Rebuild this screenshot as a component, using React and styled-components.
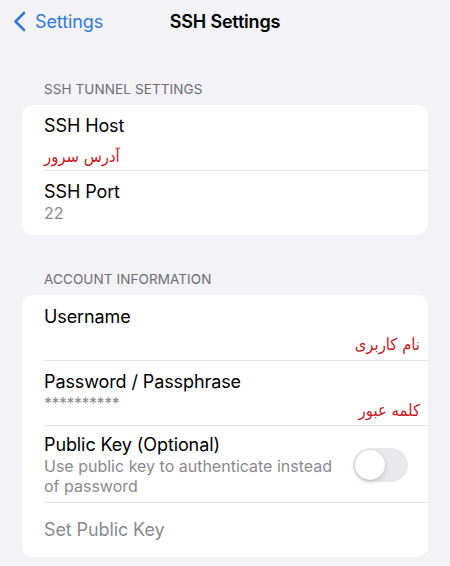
import React, { useState } from 'react';
import styled, { createGlobalStyle } from 'styled-components';

const GlobalStyle = createGlobalStyle`
  body {
    margin: 0;
    background: #f2f2f7;
    font-family: Inter, "Liberation Sans", sans-serif;
    -webkit-font-smoothing: antialiased;
  }
`;

const Page = styled.div`
  width: 450px;
  min-height: 566px;
  background: #f2f2f7;
  overflow: hidden;
`;

const NavBar = styled.header`
  height: 42px;
  display: grid;
  grid-template-columns: 1fr auto 1fr;
  align-items: center;
`;

const BackLink = styled.a`
  display: flex;
  align-items: center;
  gap: 9px;
  padding-left: 13px;
  color: #2f7bd6;
  font-size: 18px;
  letter-spacing: -0.1px;
  text-decoration: none;
  cursor: pointer;
`;

const Title = styled.h1`
  margin: 0;
  font-size: 18px;
  font-weight: 600;
  color: #000;
  letter-spacing: -0.2px;
`;

const SectionHeader = styled.div`
  padding: 0 44px;
  margin-top: ${(p) => p.$top}px;
  height: 17px;
  line-height: 17px;
  font-size: 13.5px;
  color: #6d6d72;
  text-transform: uppercase;
  letter-spacing: 0.1px;
`;

const Card = styled.section`
  margin: 7px 22px 0;
  background: #ffffff;
  border-radius: 11px;
  overflow: hidden;
`;

const Row = styled.div`
  display: flex;
  align-items: center;
  margin-left: 22px;
  padding: ${(p) => p.$pad || '10px 0 10px 0'};
  min-height: ${(p) => p.$min || 0}px;
  box-sizing: border-box;
  border-top: ${(p) => (p.$first ? 'none' : '1px solid #e3e3e8')};
`;

const RowText = styled.div`
  flex: 1;
  display: flex;
  flex-direction: column;
`;

const Label = styled.div`
  font-size: 18px;
  line-height: 22px;
  color: ${(p) => (p.$muted ? '#8a8a8e' : '#000')};
  letter-spacing: -0.1px;
`;

const Value = styled.div`
  font-size: 16px;
  line-height: 20px;
  color: #8a8a8e;
  letter-spacing: ${(p) => p.$spacing || 'normal'};
  max-width: ${(p) => p.$max || 'none'};
`;

const ValueLine = styled.div`
  display: flex;
  justify-content: space-between;
  align-items: flex-start;
  padding-right: 8px;
`;

const Note = styled.div`
  direction: rtl;
  font-family: "DejaVu Sans Condensed", "DejaVu Sans", sans-serif;
  font-size: 16.5px;
  line-height: 22px;
  color: #c81a1f;
  margin-top: ${(p) => p.$top || 0}px;
  align-self: ${(p) => (p.$end ? 'flex-end' : 'flex-start')};
  padding-right: ${(p) => (p.$end ? 8 : 0)}px;
`;

const Track = styled.button`
  position: relative;
  flex: none;
  width: 55px;
  height: 34px;
  margin-right: 20px;
  border: none;
  padding: 0;
  border-radius: 17px;
  background: ${(p) => (p.$on ? '#34c759' : '#e9e9eb')};
  cursor: pointer;
`;

const Knob = styled.span`
  position: absolute;
  top: 2px;
  left: ${(p) => (p.$on ? 23 : 2)}px;
  width: 30px;
  height: 30px;
  border-radius: 50%;
  background: #fff;
  box-shadow: 0 2px 5px rgba(0, 0, 0, 0.15), 0 0 0 0.5px rgba(0, 0, 0, 0.06);
  transition: left 0.2s;
`;

const Chevron = () => (
  <svg width="13" height="21" viewBox="0 0 13 21" fill="none">
    <path d="M11 2 L2.5 10.5 L11 19" stroke="#2f7bd6" strokeWidth="2.6" strokeLinecap="round" strokeLinejoin="round" />
  </svg>
);

const App = () => {
  const [usePublicKey, setUsePublicKey] = useState(false);

  return (
    <Page>
      <GlobalStyle />
      <NavBar>
        <BackLink>
          <Chevron />
          Settings
        </BackLink>
        <Title>SSH Settings</Title>
        <div />
      </NavBar>

      <SectionHeader $top={39}>SSH Tunnel Settings</SectionHeader>
      <Card>
        <Row $first $pad="10px 0 2px 0">
          <RowText>
            <Label>SSH Host</Label>
            <Note $top={9}>آدرس سرور</Note>
          </RowText>
        </Row>
        <Row $pad="10px 0 12px 0">
          <RowText>
            <Label>SSH Port</Label>
            <Value>22</Value>
          </RowText>
        </Row>
      </Card>

      <SectionHeader $top={36}>Account Information</SectionHeader>
      <Card>
        <Row $first $pad="11px 0 4px 0">
          <RowText>
            <Label>Username</Label>
            <Note $end $top={6}>نام کاربری</Note>
          </RowText>
        </Row>
        <Row $pad="10px 0 3px 0">
          <RowText>
            <Label>Password / Passphrase</Label>
            <ValueLine>
              <Value $spacing="-0.5px">**********</Value>
              <Note $top={7}>کلمه عبور</Note>
            </ValueLine>
          </RowText>
        </Row>
        <Row $pad="8px 0 6px 0">
          <RowText>
            <Label>Public Key (Optional)</Label>
            <Value $max="295px">Use public key to authenticate instead of password</Value>
          </RowText>
          <Track $on={usePublicKey} onClick={() => setUsePublicKey(!usePublicKey)}>
            <Knob $on={usePublicKey} />
          </Track>
        </Row>
        <Row $min={55} $pad="0">
          <Label $muted>Set Public Key</Label>
        </Row>
      </Card>
    </Page>
  );
};

export default App;
